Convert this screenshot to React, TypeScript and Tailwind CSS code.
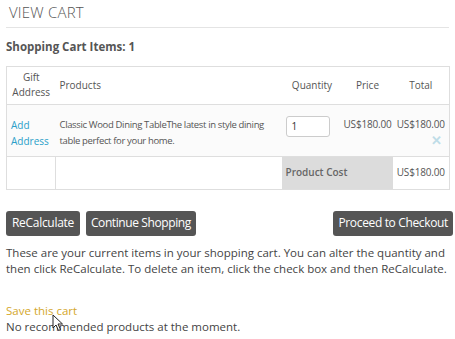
import React from 'react';

const font = { fontFamily: '"Open Sans", "Liberation Sans", sans-serif' };

function Cursor() {
  return (
    <svg className="absolute left-[52px] top-[314px]" width="12" height="18" viewBox="0 0 12 18">
      <path d="M1 1 L1 14 L4 11 L6.5 16.5 L8.5 15.5 L6 10 L10.5 10 Z" fill="#fff" stroke="#222" strokeWidth="1" />
    </svg>
  );
}

export default function App() {
  return (
    <div className="relative h-[339px] w-[455px] overflow-hidden bg-white text-[#444]" style={font}>
      <div className="mx-[6px] border-b border-[#e4e4e4] pb-[3px] pl-[3px] pt-[1px]">
        <h1 className="text-[15px] font-light uppercase tracking-[0.2px] text-[#555]">View Cart</h1>
      </div>
      <div className="px-[6px] pt-[10px] text-[11.5px] font-bold text-[#555]">Shopping Cart Items: 1</div>

      <table className="mx-[6px] mt-[11px] w-[444px] border-collapse border border-[#dedede] text-[10px] text-[#555]">
        <thead>
          <tr className="h-[38px] border-b border-[#dedede] bg-white">
            <th className="w-[49px] px-1 text-center font-normal leading-[15px]">Gift<br />Address</th>
            <th className="px-1 text-left font-normal">Products</th>
            <th className="w-[61px] text-center font-normal">Quantity</th>
            <th className="w-[50px] text-center font-normal">Price</th>
            <th className="w-[57px] text-center font-normal">Total</th>
          </tr>
        </thead>
        <tbody>
          <tr className="h-[52px] border-b border-[#dedede] bg-[#fbfbfb] align-top">
            <td className="px-1 pt-[12px] leading-[16px] text-[#2a9fc9]">Add<br />Address</td>
            <td className="px-1 pt-[12px] text-[9.5px] leading-[16px] tracking-[-0.35px]">
              Classic Wood Dining TableThe latest in style dining table perfect for your home.
            </td>
            <td className="px-[4px] pt-[11px]">
              <div className="flex h-[21px] w-[44px] items-center rounded-[3px] border border-[#ccc] bg-white pl-[5px] text-[10px] text-[#333]">1</div>
            </td>
            <td className="pt-[12px] text-center tracking-[-0.2px]">US$180.00</td>
            <td className="pt-[12px] text-center tracking-[-0.2px]">
              <div>US$180.00</div>
              <div className="flex justify-end pr-[7px] pt-[2px] text-[13px] font-bold leading-none text-[#bfdde8]">✕</div>
            </td>
          </tr>
          <tr className="h-[33px]">
            <td className="border-r border-[#dedede]"></td>
            <td></td>
            <td colSpan={2} className="bg-[#dcdcdc] px-[4px] font-semibold text-[#666]">Product Cost</td>
            <td className="text-center tracking-[-0.2px]">US$180.00</td>
          </tr>
        </tbody>
      </table>

      <div className="mt-[21px] flex items-center justify-between px-[6px]">
        <div className="flex gap-[6px]">
          <button className="h-[25px] rounded-[3px] bg-[#555] px-[6px] text-[12px] tracking-[-0.3px] text-white">ReCalculate</button>
          <button className="h-[25px] rounded-[3px] bg-[#555] px-[5px] text-[12px] tracking-[-0.4px] text-white">Continue Shopping</button>
        </div>
        <button className="-mr-[4px] h-[25px] rounded-[3px] bg-[#555] px-[5px] text-[12px] tracking-[-0.35px] text-white">Proceed to Checkout</button>
      </div>

      <p className="mt-[9px] px-[6px] text-[11.5px] leading-[16px] text-[#444]">
        These are your current items in your shopping cart. You can alter the quantity and then click ReCalculate. To delete an item, click the check box and then ReCalculate.
      </p>

      <div className="mt-[26px] px-[6px] text-[11.5px] leading-[16px]">
        <a className="text-[#d4a72c]">Save this cart</a>
        <div className="text-[#444]">No recommended products at the moment.</div>
      </div>
      <Cursor />
    </div>
  );
}
